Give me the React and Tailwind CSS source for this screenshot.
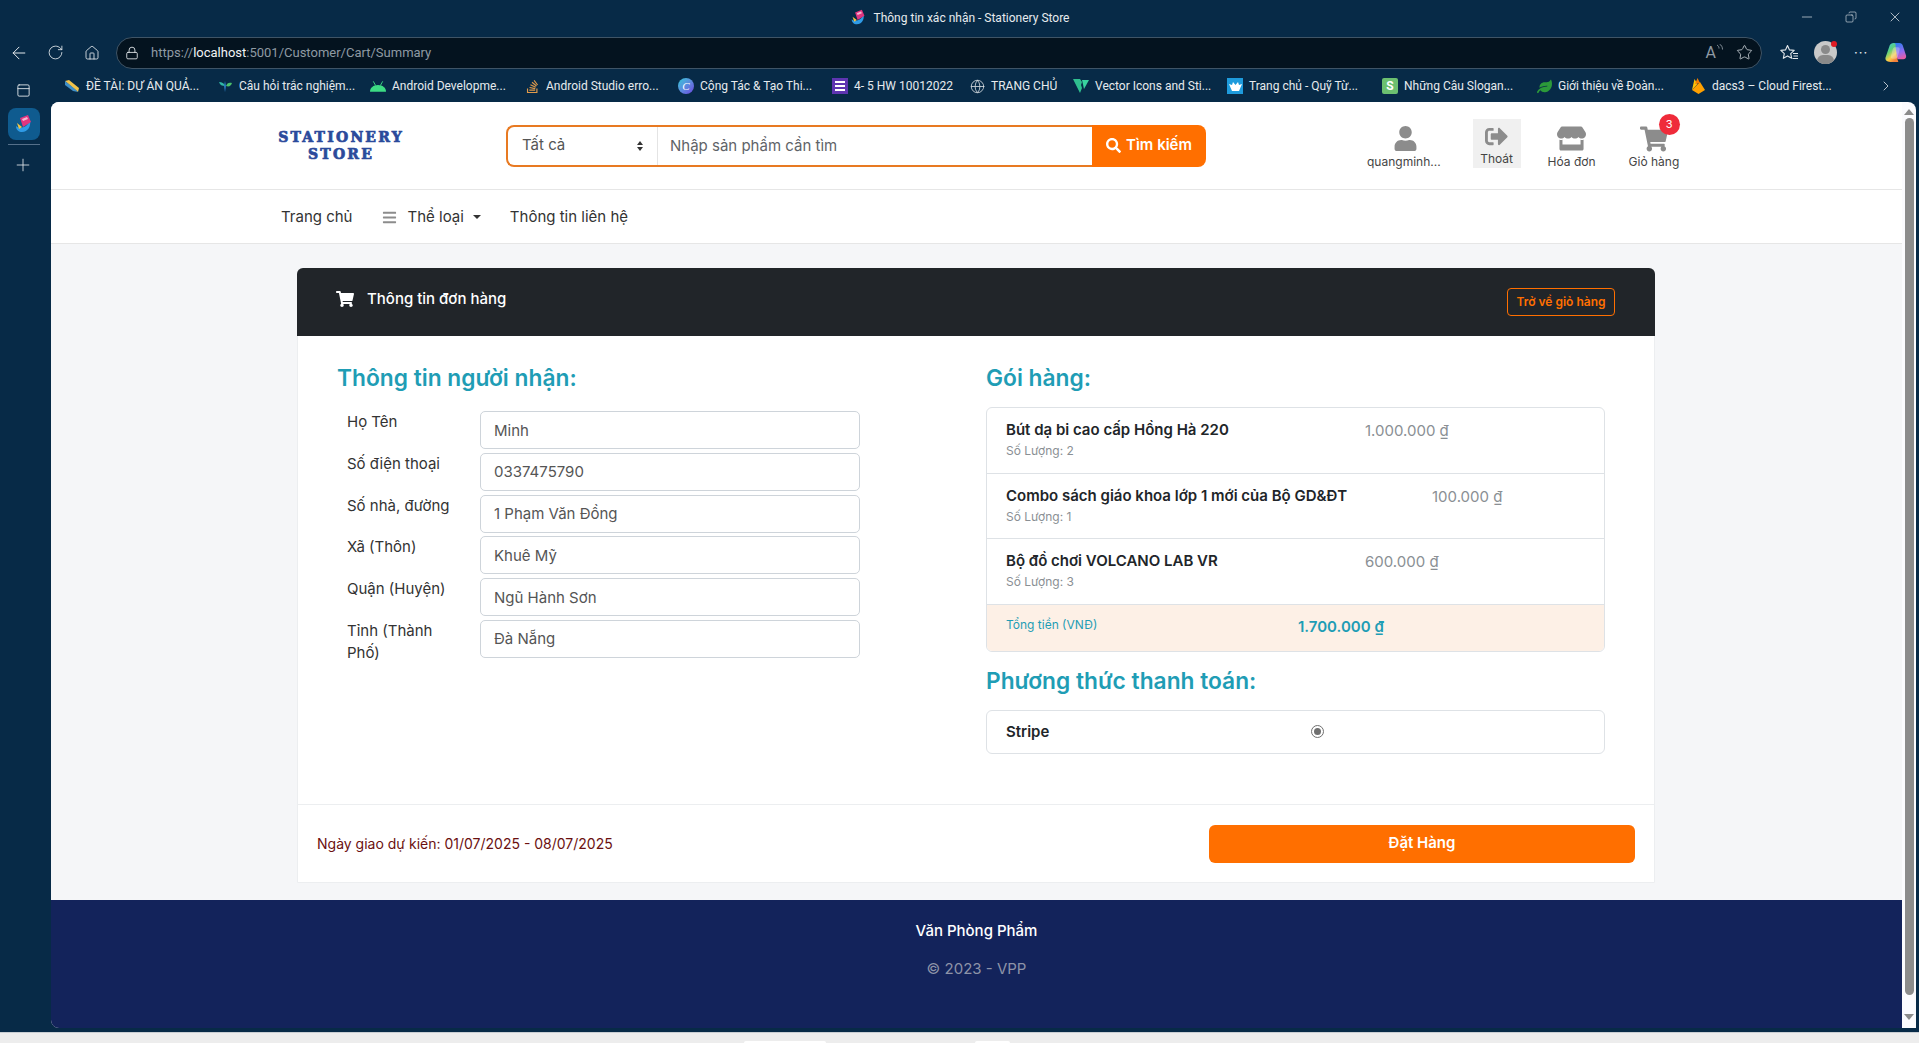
import { ArrowLeft, RotateCw, Home, Globe, Star, Plus, ChevronRight, X, Minus, Copy, PanelTop, Lock } from "lucide-react";
import { FaUser, FaSignOutAlt, FaStore, FaShoppingCart, FaSearch, FaBars, FaStackOverflow, FaLeaf } from "react-icons/fa";

const inter = { fontFamily: "Inter, sans-serif" };

function Favicon({ size = 18 }) {
  return (
    <svg width={size} height={size} viewBox="0 0 20 20">
      <path d="M2 12c3 3 8 2 11-1l3-4c1 5-2 11-8 11-3 0-6-2-6-6z" fill="#2f9be6" />
      <path d="M6 4l8-3 3 7-8 5z" fill="#e0357f" />
      <path d="M8 5l5-2 1 2-5 2z" fill="#f7b6d2" />
      <path d="M3 9l5 4-3 2z" fill="#f4c542" />
    </svg>
  );
}

function Copilot() {
  return (
    <svg width="23" height="23" viewBox="0 0 24 24">
      <defs>
        <linearGradient id="cpa" x1="0" y1="0" x2="0.6" y2="1">
          <stop offset="0" stopColor="#37c8e8" />
          <stop offset="0.45" stopColor="#5fd07a" />
          <stop offset="0.75" stopColor="#f7d046" />
          <stop offset="1" stopColor="#f4803c" />
        </linearGradient>
        <linearGradient id="cpb" x1="0.4" y1="0" x2="0.7" y2="1">
          <stop offset="0" stopColor="#2f7bf0" />
          <stop offset="0.55" stopColor="#8f6cf2" />
          <stop offset="1" stopColor="#ee5aa0" />
        </linearGradient>
      </defs>
      <path d="M10 2h6c2 0 3 1 3.600 2.800L23 15c.7 2.500-1 4-3 4h-6z" fill="url(#cpb)" />
      <path d="M6 4.500C6.500 3 8 2 10 2c2 0 2.500 1.500 2 3.500L14 19l1 3H8c-4 0-7-1.500-6.500-4.500z" fill="url(#cpa)" />
      <path d="M11 6.500h3.500c1.500 0 2.200 1 1.800 2.500l-1.800 7c-.4 1.500-1.300 2.500-3 2.500H9c-1.500 0-2.200-1-1.800-2.500L9 9c.3-1.500 1-2.500 2-2.500z" fill="#f4f1ff" fillOpacity="0.3" />
    </svg>
  );
}

function FavoritesIcon() {
  return (
    <svg width="19" height="18" viewBox="0 0 19 18" fill="none" stroke="currentColor" strokeWidth="1.1" strokeLinejoin="round">
      <path d="M7.500 1.500l2 4.400 4.700.5-3.500 3.200 1 4.700-4.200-2.400-4.200 2.400 1-4.700L.8 6.400l4.700-.5z" />
      <path d="M13 9.500h5M13.500 12h4.500M12.500 14.500h5.500" />
    </svg>
  );
}

function ReadAloudIcon() {
  return (
    <span className="flex items-start text-[#8f9aa3]">
      <span className="text-[16px] leading-[18px]">A</span>
      <svg width="7" height="9" viewBox="0 0 7 9" fill="none" stroke="currentColor" strokeWidth="0.9">
        <path d="M1 1c1.500 1 2 2 2 3.500M3.500 0c2 1.300 3 3 3 5.500" />
      </svg>
    </span>
  );
}

function PencilIcon() {
  return (
    <svg width="14" height="14" viewBox="0 0 14 14">
      <path d="M0 2l4-1 10 8-1 4z" fill="#f0c24a" />
      <path d="M0 2l10 8 3 3-5-1-8-6z" fill="#3f8fc8" />
    </svg>
  );
}
function SproutIcon() {
  return (
    <svg width="13" height="12" viewBox="0 0 13 12">
      <path d="M0 2c3 0 5 1 6 4C3 6 1 5 0 2z" fill="#2fb7a5" />
      <path d="M13 3C10 2 8 3 7 6c3 1 5 0 6-3z" fill="#4cc06a" />
      <path d="M6 1l1 5-1 6-1-6z" fill="#2a7fc4" />
    </svg>
  );
}
function AndroidIcon() {
  return (
    <svg width="17" height="11" viewBox="0 0 17 11">
      <path d="M0 11c0-4 3.500-7 8.500-7s8.500 3 8.500 7z" fill="#3ddc84" />
      <path d="M3.500 0l2.500 4.500M13.500 0L11 4.500" stroke="#3ddc84" />
    </svg>
  );
}
function CanvaIcon() {
  return (
    <span className="flex h-4 w-4 items-center justify-center rounded-full bg-gradient-to-br from-[#22c7d6] to-[#6a3fe0] text-[11px] italic leading-none text-white [font-family:'Liberation_Serif',serif]">
      C
    </span>
  );
}
function FormsIcon() {
  return (
    <span className="flex h-4 w-4 flex-col justify-center gap-[2px] bg-[#5e35b1] px-[3px]">
      <span className="h-[2px] bg-white" />
      <span className="h-[2px] bg-white" />
      <span className="h-[2px] bg-white" />
    </span>
  );
}
function VuetifyIcon() {
  return (
    <svg width="16" height="14" viewBox="0 0 16 14">
      <path d="M0 0h7l2 3-1 3 1 3-2 5z" fill="#2fbf8f" />
      <path d="M9 1h7l-5 9z" fill="#38d39f" />
    </svg>
  );
}
function LotusIcon() {
  return (
    <span className="flex h-4 w-4 items-center justify-center bg-[#1e9bdc]">
      <svg width="13" height="10" viewBox="0 0 13 10">
        <path d="M0 3l3 1 1-3 2.500 3L9 1l1 3 3-1-3 7H3z" fill="#fff" />
      </svg>
    </span>
  );
}
function SloganIcon() {
  return (
    <span className="flex h-4 w-4 items-center justify-center rounded-[2px] bg-[#6cc070] text-[12px] font-bold leading-none text-white">S</span>
  );
}
function FirebaseIcon() {
  return (
    <svg width="13" height="16" viewBox="0 0 13 16">
      <path d="M0 12L2.500 1l3 5z" fill="#ffc107" />
      <path d="M0 12L8 4l5 8-6.500 4z" fill="#ffa000" />
      <path d="M3 6l2.500-6L8 5z" fill="#f57c00" />
    </svg>
  );
}

const bookmarks = [
  { icon: <PencilIcon />, text: "ĐỀ TÀI: DỰ ÁN QUẢ...", box: "w-[153px]" },
  { icon: <SproutIcon />, text: "Câu hỏi trắc nghiệm...", box: "w-[153px]" },
  { icon: <AndroidIcon />, text: "Android Developme...", box: "w-[154px]" },
  { icon: <FaStackOverflow className="text-[15px] text-[#e09a4a]" />, text: "Android Studio erro...", box: "w-[154px]" },
  { icon: <CanvaIcon />, text: "Cộng Tác & Tạo Thi...", box: "w-[154px]" },
  { icon: <FormsIcon />, text: "4- 5 HW 10012022", box: "w-[137px]" },
  { icon: <Globe size={15} strokeWidth={1.3} className="text-[#d8dde2]" />, text: "TRANG CHỦ", box: "w-[104px]" },
  { icon: <VuetifyIcon />, text: "Vector Icons and Sti...", box: "w-[154px]" },
  { icon: <LotusIcon />, text: "Trang chủ - Quỹ Từ...", box: "w-[155px]" },
  { icon: <SloganIcon />, text: "Những Câu Slogan...", box: "w-[154px]" },
  { icon: <FaLeaf className="text-[15px] text-[#2c9a3a]" />, text: "Giới thiệu về Đoàn...", box: "w-[154px]" },
  { icon: <FirebaseIcon />, text: "dacs3 – Cloud Firest...", box: "w-[170px]" },
];

const fields = [
  ["Họ Tên", "Minh"],
  ["Số điện thoại", "0337475790"],
  ["Số nhà, đường", "1 Phạm Văn Đồng"],
  ["Xã (Thôn)", "Khuê Mỹ"],
  ["Quận (Huyện)", "Ngũ Hành Sơn"],
  ["Tỉnh (Thành Phố)", "Đà Nẵng"],
];

const items = [
  { name: "Bút dạ bi cao cấp Hồng Hà 220", qty: "Số Lượng: 2", price: "1.000.000 ₫", col: "w-[359px]" },
  { name: "Combo sách giáo khoa lớp 1 mới của Bộ GD&ĐT", qty: "Số Lượng: 1", price: "100.000 ₫", col: "w-[426px]" },
  { name: "Bộ đồ chơi VOLCANO LAB VR", qty: "Số Lượng: 3", price: "600.000 ₫", col: "w-[359px]" },
];

function BrowserChrome() {
  return (
    <>
      <div className="relative flex h-[35px] items-center justify-center gap-[7px] text-[12px] text-[#e6eaee] [font-family:Roboto,sans-serif]">
        <Favicon size={17} />
        <span>Thông tin xác nhận - Stationery Store</span>
        <div className="absolute right-[16px] top-0 flex h-[33px] items-center gap-[30px] text-[#e6eaee]">
          <Minus size={16} strokeWidth={1} />
          <Copy size={12} strokeWidth={1.2} className="-scale-x-100" />
          <X size={16} strokeWidth={1.1} />
        </div>
      </div>
      <div className="flex h-[35px] items-center text-[#e3e8ec]">
        <ArrowLeft size={20} strokeWidth={1.2} className="ml-[9px]" />
        <RotateCw size={17} strokeWidth={1.2} className="ml-[18px]" />
        <Home size={16} strokeWidth={1.3} className="ml-[20px]" />
        <div className="ml-[16px] flex h-[32px] w-[1646px] items-center rounded-full border border-[#3f5466] bg-[#04131f] pl-[8px] pr-[8px] text-[13px] [font-family:Roboto,sans-serif]">
          <Lock size={14} strokeWidth={1.5} className="text-[#e3e8ec]" />
          <span className="ml-[12px] text-[#8f9aa3]">
            https://<span className="text-[#f2f4f6]">localhost</span>:5001/Customer/Cart/Summary
          </span>
          <span className="ml-auto">
            <ReadAloudIcon />
          </span>
          <Star size={17} strokeWidth={1.2} className="ml-[13px] text-[#c9d0d6]" />
        </div>
        <span className="ml-[18px]">
          <FavoritesIcon />
        </span>
        <span className="relative ml-[15px] h-[23px] w-[23px] overflow-hidden rounded-full bg-[#c9c9c9]">
          <span className="absolute left-[7px] top-[4px] h-[9px] w-[9px] rounded-full bg-[#8a8a8a]" />
          <span className="absolute left-[3px] top-[14px] h-[12px] w-[17px] rounded-full bg-[#8a8a8a]" />
        </span>
        <span className="relative -ml-[6px] -mt-[18px] h-[6px] w-[6px] rounded-full bg-[#e01b24]" />
        <span className="ml-[17px] text-[13px] tracking-[1px]">···</span>
        <span className="ml-[16px]">
          <Copilot />
        </span>
      </div>
    </>
  );
}

function BookmarkBar() {
  return (
    <div className="flex h-[32px] items-center pl-[13px] text-[12px] text-[#e6eaee] [font-family:Roboto,sans-serif]">
      {bookmarks.map((b) => (
        <div key={b.text} className={`flex items-center gap-[6px] ${b.box}`}>
          <span className="flex w-[16px] justify-center">{b.icon}</span>
          <span className="whitespace-nowrap">{b.text}</span>
        </div>
      ))}
      <ChevronRight size={16} strokeWidth={1.2} className="ml-[18px]" />
    </div>
  );
}

function Sidebar() {
  return (
    <div className="flex w-[51px] shrink-0 flex-col items-center pr-[3px] text-[#e6eaee]">
      <PanelTop size={15} strokeWidth={1.4} className="mt-[13px] -translate-x-px" />
      <div className="mt-[10px] flex h-[32px] w-[32px] items-center justify-center rounded-lg bg-[#0f5b8f]">
        <Favicon size={20} />
      </div>
      <div className="mt-[4px] h-px w-[32px] bg-[#55708a]" />
      <Plus size={20} strokeWidth={1} className="mt-[10px] -translate-x-px" />
    </div>
  );
}

function HeaderLink({ icon, label, active, badge }) {
  return (
    <div className={`relative flex h-[49px] flex-col items-center text-[12px] text-[#444] ${active ? "w-[48px] bg-[#f0f0f0] pt-[6px]" : "pt-[8px]"}`}>
      <span className="flex h-[24px] items-center">{icon}</span>
      <span className={active ? "mt-[2px] leading-[18px]" : "mt-[2px] leading-[18px]"}>{label}</span>
      {badge && (
        <span className="absolute -top-[5px] left-[30px] flex h-[21px] w-[21px] items-center justify-center rounded-full bg-[#ef2b3a] text-[11px] text-white">
          {badge}
        </span>
      )}
    </div>
  );
}

function SiteHeader() {
  return (
    <>
      <div className="flex h-[88px] items-center border-b border-[#e6e6e6] bg-white pl-[226px]">
        <div className="w-[128px] whitespace-nowrap text-center text-[14px] font-bold leading-[17px] tracking-[2.200px] text-[#2b4a9b] [-webkit-text-stroke:0.7px_#2b4a9b] [font-family:'DejaVu_Serif',serif]">
          STATIONERY
          <br />
          STORE
        </div>
        <div className="ml-[101px] flex h-[42px] w-[700px]">
          <div className="flex flex-1 rounded-l-lg border-2 border-r-0 border-[#e87a22] bg-white text-[#555]">
            <div className="flex w-[150px] items-center border-r border-[#e4e4e4] pl-[14px] pr-[14px] text-[15px]">
              Tất cả
              <span className="ml-auto flex flex-col gap-[2px]">
                <span className="h-0 w-0 border-x-[3.500px] border-b-[4px] border-x-transparent border-b-[#333]" />
                <span className="h-0 w-0 border-x-[3.500px] border-t-[4px] border-x-transparent border-t-[#333]" />
              </span>
            </div>
            <div className="flex flex-1 items-center pl-[12px] pt-[1px] text-[15px] text-[#5f6368]">Nhập sản phẩm cần tìm</div>
          </div>
          <button className="flex w-[114px] items-center justify-center gap-[5px] rounded-r-lg bg-[#ff6f00] text-[15px] font-semibold text-white">
            <FaSearch className="text-[15px]" /> Tìm kiếm
          </button>
        </div>
        <div className="-mt-[5px] ml-[161px] flex items-start text-[#8c8c8c]">
          <HeaderLink icon={<FaUser className="translate-x-[2px] text-[25px] text-[#8c8c8c]" />} label="quangminh..." />
          <div className="ml-[32px]">
            <HeaderLink active icon={<FaSignOutAlt className="text-[23px] text-[#8c8c8c]" />} label="Thoát" />
          </div>
          <div className="ml-[27px]">
            <HeaderLink icon={<FaStore className="text-[29px] text-[#8c8c8c]" />} label="Hóa đơn" />
          </div>
          <div className="ml-[33px]">
            <HeaderLink badge="3" icon={<FaShoppingCart className="text-[28px] text-[#8c8c8c]" />} label="Giỏ hàng" />
          </div>
        </div>
      </div>
      <div className="flex h-[54px] items-center border-b border-[#e6e6e6] bg-white pl-[230px] pt-[1px] text-[15px] text-[#333]">
        <span>Trang chủ</span>
        <FaBars className="ml-[29px] text-[15px] text-[#8c8c8c]" />
        <span className="ml-[11px]">Thể loại</span>
        <span className="ml-[9px] h-0 w-0 border-x-[4px] border-t-[4px] border-x-transparent border-t-[#333]" />
        <span className="ml-[29px]">Thông tin liên hệ</span>
      </div>
    </>
  );
}

function OrderCard() {
  return (
    <div className="ml-[246px] mt-[24px] w-[1358px] rounded-t-md border border-[#eceef0] bg-white">
      <div className="-m-px flex h-[68px] items-center rounded-t-md bg-[#212529] pl-[39px] pr-[40px] text-white">
        <div className="-mt-[6px] flex items-center">
          <FaShoppingCart className="text-[18px]" />
          <span className="ml-[13px] text-[15px] font-medium">Thông tin đơn hàng</span>
        </div>
        <button className="ml-auto h-[28px] w-[108px] rounded-[4px] border border-[#ff6f00] text-[12px] font-semibold text-[#ff6f00]">
          Trở về giỏ hàng
        </button>
      </div>
      <div className="grid h-[469px] grid-cols-[649px_619px] pl-[39px] pt-[27px]">
        <div>
          <h3 className="mb-[17px] text-[22.750px] font-semibold leading-[32px] text-[#1f9db5]">Thông tin người nhận:</h3>
          <div className="flex flex-col gap-[3.800px] pl-[10px]">
            {fields.map(([label, value]) => (
              <div key={label} className="flex h-[38px] items-start text-[15px] text-[#333]">
                <div className="w-[133px] pr-[12px] leading-[22px]">{label}</div>
                <input
                  readOnly
                  value={value}
                  className="h-[38px] w-[380px] rounded-[5px] border border-[#ced4da] px-[13px] text-[15px] text-[#555] outline-none"
                />
              </div>
            ))}
          </div>
        </div>
        <div>
          <h3 className="mb-[13px] text-[22.750px] font-semibold leading-[32px] text-[#1f9db5]">Gói hàng:</h3>
          <div className="overflow-hidden rounded-md border border-[#dee2e6]">
            {items.map((it) => (
              <div key={it.name} className="flex h-[65.500px] items-start border-b border-[#dee2e6] pl-[19px] pt-[11px]">
                <div className={it.col}>
                  <div className="text-[15px] font-semibold leading-[22px] text-[#212529]">{it.name}</div>
                  <div className="text-[12px] leading-[20px] text-[#8a8f94]">{it.qty}</div>
                </div>
                <div className="text-[15px] leading-[24px] text-[#8a8f94]">{it.price}</div>
              </div>
            ))}
            <div className="flex h-[46px] items-start bg-[#fdf0e6] pl-[19px] pt-[10px]">
              <div className="w-[292px] text-[12px] leading-[20px] text-[#1f9db5]">Tổng tiền (VNĐ)</div>
              <div className="text-[15px] font-semibold leading-[24px] text-[#1f9db5]">1.700.000 ₫</div>
            </div>
          </div>
          <h3 className="mb-[13px] mt-[13px] text-[22.750px] font-semibold leading-[32px] text-[#1f9db5]">Phương thức thanh toán:</h3>
          <div className="flex h-[44px] items-center rounded-md border border-[#dee2e6] pl-[19px]">
            <div className="w-[305px] pt-[1px] text-[15px] font-semibold text-[#212529]">Stripe</div>
            <span className="flex h-[13px] w-[13px] items-center justify-center rounded-full border-[1.500px] border-[#6f6f6f] bg-white">
              <span className="h-[7px] w-[7px] rounded-full bg-[#6f6f6f]" />
            </span>
          </div>
        </div>
      </div>
      <div className="flex h-[78px] items-center border-t border-[#eceef0] pl-[19px] pr-[19px]">
        <span className="text-[14px] text-[#6b1010]">Ngày giao dự kiến: 01/07/2025 - 08/07/2025</span>
        <button className="ml-auto h-[38px] w-[426px] rounded-md bg-[#ff6f00] text-[15px] font-semibold text-white">Đặt Hàng</button>
      </div>
    </div>
  );
}

function ScrollTrack() {
  return (
    <div className="flex w-[14px] shrink-0 flex-col items-center bg-[#fbfbfe]">
      <span className="mt-[7px] h-0 w-0 border-x-[5px] border-b-[6px] border-x-transparent border-b-[#8c8c8c]" />
      <span className="mt-[3px] h-[877px] w-[9px] rounded-full bg-[#8c8c8c]" />
      <span className="mt-[19px] h-0 w-0 border-x-[5px] border-t-[6px] border-x-transparent border-t-[#8c8c8c]" />
    </div>
  );
}

export default function App() {
  return (
    <div className="flex h-screen w-full flex-col overflow-hidden bg-[#072a47]" style={inter}>
      <BrowserChrome />
      <div className="flex flex-1">
        <Sidebar />
        <div className="flex min-w-0 flex-1 flex-col">
          <BookmarkBar />
          <div className="mr-[3px] flex h-[926px] overflow-hidden rounded-t-lg rounded-bl-lg">
            <div className="flex min-w-0 flex-1 flex-col bg-[#f5f6f8]">
              <SiteHeader />
              <main className="flex-1">
                <OrderCard />
              </main>
              <footer className="flex h-[128px] flex-col items-center bg-[#13235b] pt-[20px] text-[15px]">
                <div className="font-medium leading-[22px] text-white">Văn Phòng Phẩm</div>
                <div className="mt-[16px] leading-[22px] text-[#8d93a8]">© 2023 - VPP</div>
              </footer>
            </div>
            <ScrollTrack />
          </div>
        </div>
      </div>
      <div className="flex h-[11px] items-end border-t border-[#c9ced3] bg-[#ededed] pl-[744px]">
        <span className="h-[2px] w-[82px] rounded-t-md bg-white" />
        <span className="ml-[149px] h-[2px] w-[35px] rounded-t-md bg-white" />
      </div>
    </div>
  );
}
